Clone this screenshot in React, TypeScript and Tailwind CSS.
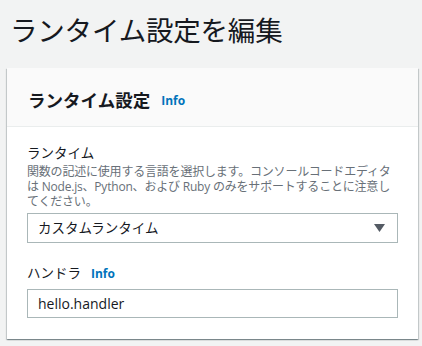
import React from "react";

const font = {
  fontFamily: '"Open Sans", "Noto Sans CJK JP", sans-serif',
};

function Info() {
  return (
    <span className="text-[12px] font-bold text-[#0073bb] leading-none">
      Info
    </span>
  );
}

export default function App() {
  return (
    <div
      className="min-h-[346px] w-[422px] bg-[#f2f3f3] text-[#16191f]"
      style={font}
    >
      <h1 className="px-[10px] pt-[13px] text-[27.5px] font-normal leading-[36px] tracking-[-0.2px]">
        ランタイム設定を編集
      </h1>
      <div className="ml-[7px] mr-[4px] mt-[19px] bg-white shadow-[0_1px_1px_0_rgba(0,28,36,0.3),1px_1px_1px_0_rgba(0,28,36,0.15),-1px_1px_1px_0_rgba(0,28,36,0.15)]">
        <div className="flex items-center border-b border-[#eaeded] bg-[#fafafa] px-[21px] pb-[15px] pt-[21px]">
          <h2 className="text-[17.5px] font-bold leading-[22px]">
            ランタイム設定
          </h2>
          <span className="ml-[11px] mt-[2px] flex">
            <Info />
          </span>
        </div>
        <div className="px-[20px] pb-[21px] pt-[16px]">
          <div className="text-[13.5px] leading-[20px]">ランタイム</div>
          <p className="mt-[1px] text-[12px] leading-[15px] tracking-[-0.2px] text-[#687078]">
            関数の記述に使用する言語を選択します。コンソールコードエディタは
            Node.js、Python、および Ruby
            のみをサポートすることに注意してください。
          </p>
          <div className="mt-[4px] flex h-[30px] items-center justify-between border border-[#aab7b8] bg-white pl-[10px] pr-[12px]">
            <span className="text-[13.5px]">カスタムランタイム</span>
            <svg width="11" height="8" viewBox="0 0 11 8">
              <path d="M0 0 H11 L5.5 8 Z" fill="#545b64" />
            </svg>
          </div>
          <div className="mt-[20px] flex items-center text-[13.5px] leading-[20px]">
            <span>ハンドラ</span>
            <span className="ml-[10px] mt-[2px] flex">
              <Info />
            </span>
          </div>
          <div className="mt-[6px] flex h-[29px] items-center border border-[#aab7b8] bg-white px-[10px] text-[14px]">
            hello.handler
          </div>
        </div>
      </div>
    </div>
  );
}
